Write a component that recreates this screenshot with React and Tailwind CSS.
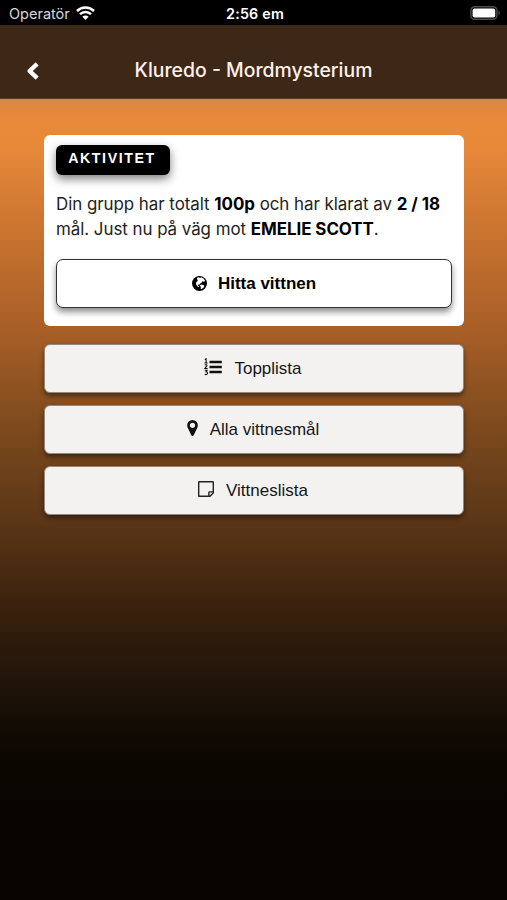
const links = [
  { label: "Topplista", icon: ListIcon },
  { label: "Alla vittnesmål", icon: MarkerIcon },
  { label: "Vittneslista", icon: NoteIcon },
];

function WifiIcon() {
  return (
    <svg className="-mt-[2px]" width="19" height="14" viewBox="0 0 19 14" fill="none" stroke="white" strokeWidth="2.5">
      <path d="M1 5a12.2 12.2 0 0 1 17 0" />
      <path d="M4 8.2a7.9 7.9 0 0 1 11 0" />
      <path d="M6.4 10.8a4.3 4.3 0 0 1 6.2 0L9.5 14z" fill="white" stroke="none" />
    </svg>
  );
}

function BatteryIcon() {
  return (
    <svg className="-mt-[2px]" width="31" height="14" viewBox="0 0 31 14">
      <rect x="0.9" y="0.8" width="26" height="12.4" rx="3.6" fill="none" stroke="#4c4c4c" strokeWidth="1.4" />
      <rect x="2.6" y="2.4" width="22.6" height="9.2" rx="2" fill="white" />
      <path d="M28.4 4.8v4.4a2.4 2.4 0 0 0 0-4.4z" fill="#4c4c4c" />
    </svg>
  );
}

function BackIcon() {
  return (
    <svg className="ml-[26px]" width="14" height="18" viewBox="0 0 14 18" fill="none" stroke="white" strokeWidth="4.4" strokeLinejoin="round">
      <path d="M11.2 1.9L3.6 9l7.6 7.1" />
    </svg>
  );
}

function GlobeIcon() {
  return (
    <svg width="15" height="15" viewBox="0 0 15 15">
      <circle cx="7.5" cy="7.5" r="7.5" fill="black" />
      <path d="M4.8 1.9l2-.7 1.3.8 1-.8 2.4 1.2 1.6 2.4-.9.9-1.6-.5-.9 1.3-1.5.9-.8 1.3-1.5-.2-.3 1 1.4.6-.2.8-1.6-.6-1.2-2.1.2-1.9 1.6-1.5-.5-1.3z" fill="white" />
      <path d="M7.6 9.3l2.3-.7 2.6 1.1-.6 1.6-2.4 2-.9-.9.3-1.4z" fill="white" />
    </svg>
  );
}

function ListIcon() {
  return (
    <svg className="-mt-1" width="18" height="18" viewBox="0 0 18 18" fill="none" stroke="#111">
      <path d="M5.5 4h12.3M5.5 9h12.3M5.5 14h12.3" strokeWidth="2.6" />
      <path d="M.8 1.6L2.1.8v4M.5 5h3.2M.7 7.2c1-1 2.6-.3 2.1.7L.8 10.5h2.8M.7 12.2h2.4l-1.1 1.6c2.2 0 1.8 2.8-.2 2.8L.6 16.2" strokeWidth="1.1" />
    </svg>
  );
}

function MarkerIcon() {
  return (
    <svg className="-mt-[3px]" width="11" height="16" viewBox="384 128 1024 1536" fill="#111">
      <path d="M1152 640q0-106-75-181t-181-75-181 75-75 181 75 181 181 75 181-75 75-181zm256 0q0 109-33 179l-364 774q-16 33-47.5 52t-67.5 19-67.5-19-46.5-52l-365-774q-33-70-33-179 0-212 150-362t362-150 362 150 150 362z" />
    </svg>
  );
}

function NoteIcon() {
  return (
    <svg className="-mt-1" width="16" height="16" viewBox="0 0 16 16" fill="none" stroke="#222" strokeWidth="1.4">
      <path d="M1.2.7h13.6q.5 0 .5.5v10.2q0 .5-.4.9l-2.6 2.6q-.4.4-.9.4H1.2q-.5 0-.5-.5V1.2q0-.5.5-.5z" />
      <path d="M15.2 10.9h-3.7q-.6 0-.6.6v3.7" />
    </svg>
  );
}

export default function App() {
  return (
    <div className="flex h-[900px] w-[507px] flex-col overflow-hidden bg-[linear-gradient(to_bottom,#dc873f_98px,#e9893b_120px,#e8893a_145px,#ca7430_230px,#a85f27_330px,#804b1e_420px,#5f3918_510px,#3b210d_605px,#21150a_680px,#0b0701_755px,#080500_800px)] font-['Inter',sans-serif]">
      <div className="grid h-[25px] shrink-0 grid-cols-3 items-center bg-black pt-[3px] pl-[9px] pr-[6px] text-white">
        <div className="flex items-center gap-[6px] text-[14.5px] text-[#d8d8d8]">
          Operatör
          <WifiIcon />
        </div>
        <span className="text-center text-[14.3px] font-semibold tracking-[0.2px]">2:56 em</span>
        <div className="flex justify-end">
          <BatteryIcon />
        </div>
      </div>

      <header className="grid h-[74px] shrink-0 grid-cols-[66px_1fr_66px] items-center border-b border-[#5a3c22] bg-[#3d2716] pt-[18px]">
        <BackIcon />
        <h1 className="text-center text-[19.4px] font-medium text-[#fbf1ea]">Kluredo - Mordmysterium</h1>
      </header>

      <main className="flex flex-col pt-9 pr-[43px] pl-11">
        <section className="h-[191px] rounded-[6px] bg-white px-3 pt-[10px]">
          <div className="flex h-[30px] w-[114px] items-center justify-center rounded-[6px] bg-black pr-[2px] pb-[2px] font-['Liberation_Sans',sans-serif] text-[14.2px] font-bold tracking-[1.6px] text-white shadow-[0_4px_10px_rgba(0,0,0,0.5)]">
            AKTIVITET
          </div>
          <p className="mt-[17px] text-[16.9px] leading-[25px] tracking-[-0.03px] whitespace-nowrap text-[#212121]">
            Din grupp har totalt <b className="text-black">100p</b> och har klarat av <b className="text-black">2 / 18</b>
            <br />
            mål. Just nu på väg mot <b className="text-black">EMELIE SCOTT</b>.
          </p>
          <button className="mt-[17px] flex h-[49px] w-full items-center justify-center gap-[11px] rounded-[7px] border-[1.5px] border-[#333] bg-white font-['Liberation_Sans',sans-serif] text-[17px] font-bold text-black shadow-[0_4px_6px_rgba(0,0,0,0.45)]">
            <GlobeIcon />
            Hitta vittnen
          </button>
        </section>

        <nav className="mt-[18px] flex flex-col gap-3">
          {links.map(({ label, icon: Icon }) => (
            <button
              key={label}
              className="flex h-[49px] items-center justify-center gap-3 rounded-[6px] border border-[#8f8981] bg-[#f3f2f1] pr-[2px] font-['Liberation_Sans',sans-serif] text-[17px] text-[#161616] shadow-[0_3px_5px_rgba(0,0,0,0.45)]"
            >
              <Icon />
              {label}
            </button>
          ))}
        </nav>
      </main>
    </div>
  );
}
